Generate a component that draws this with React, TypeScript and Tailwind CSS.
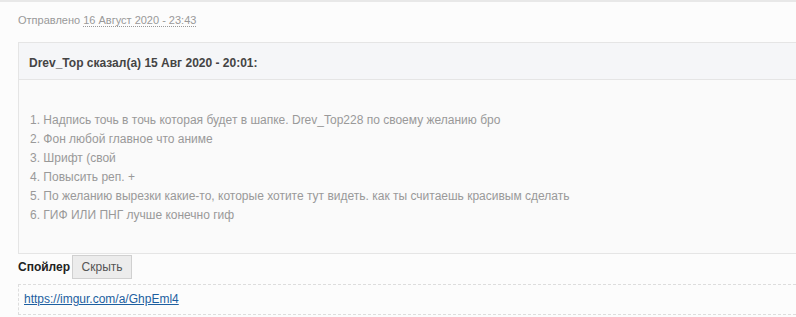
export default function App() {
  const lines = [
    "1. Надпись точь в точь которая будет в шапке. Drev_Top228 по своему желанию бро",
    "2. Фон любой главное что аниме",
    "3. Шрифт (свой",
    "4. Повысить реп. +",
    "5. По желанию вырезки какие-то, которые хотите тут видеть. как ты считаешь красивым сделать",
    "6. ГИФ ИЛИ ПНГ лучше конечно гиф",
  ];
  return (
    <div className="w-[796px] h-[317px] overflow-hidden bg-[#fcfcfc] font-['Liberation_Sans',Arial,sans-serif]">
      <div className="h-[2px] bg-[#e8e8e8]" />
      <div className="pl-[18px] pt-[11px] text-[11px] leading-[14px] text-[#999]">
        Отправлено{" "}
        <span className="border-b border-dotted border-[#999]">16 Август 2020 - 23:43</span>
      </div>
      <div className="ml-[18px] mr-[-20px] mt-[15px] border border-[#e5e5e5] bg-[#fafafa]">
        <div className="h-[37px] bg-[#f5f6f8] border-b border-[#e5e5e5] pl-[10px] pt-[13px] text-[12px] leading-[14px] font-bold text-[#444]">
          Drev_Top сказал(а) 15 Авг 2020 - 20:01:
        </div>
        <div className="pl-[11px] pt-[31px] pb-[28px] text-[12px] leading-[19px] text-[#999]">
          {lines.map((l) => (
            <div key={l}>{l}</div>
          ))}
        </div>
      </div>
      <div className="flex items-center gap-[2px] pl-[18px] pt-[1px]">
        <span className="text-[12px] font-bold text-[#222]">Спойлер</span>
        <button className="h-[24px] w-[60px] border border-[#d0d0d0] bg-[#ececec] text-[12px] text-[#555]">
          Скрыть
        </button>
      </div>
      <div className="ml-[18px] mr-[-20px] mt-[5px] h-[31px] border border-dashed border-[#ddd] pl-[5px] pt-[7px] text-[12px] leading-[14px]">
        <a href="#" className="text-[#1d5fa0] underline">
          https://imgur.com/a/GhpEml4
        </a>
      </div>
    </div>
  );
}
